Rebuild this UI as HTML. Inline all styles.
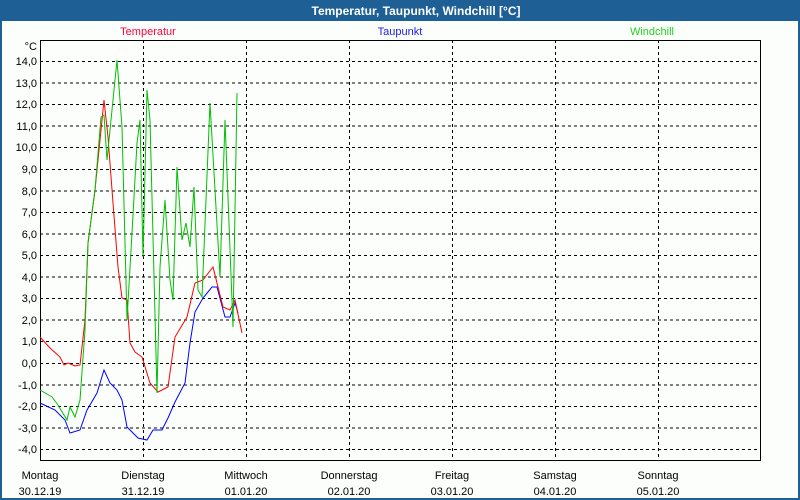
<!DOCTYPE html>
<html><head><meta charset="utf-8"><style>
html,body{margin:0;padding:0;width:800px;height:500px;overflow:hidden;background:#fcfefc;}
svg{display:block}
text{font-family:"Liberation Sans",sans-serif;font-size:11px;}
</style></head><body>
<svg width="800" height="500" xmlns="http://www.w3.org/2000/svg">
<rect x="0" y="0" width="800" height="500" fill="#1e6096"/>
<rect x="2" y="21" width="796" height="477" fill="#fcfefc"/>
<text x="416" y="15" fill="#fff" font-weight="bold" text-anchor="middle" textLength="209" lengthAdjust="spacingAndGlyphs" style="font-size:12px">Temperatur, Taupunkt, Windchill [°C]</text>
<text x="148" y="35" fill="#ff0040" text-anchor="middle">Temperatur</text>
<text x="400" y="35" fill="#2020e0" text-anchor="middle">Taupunkt</text>
<text x="652" y="35" fill="#20d020" text-anchor="middle">Windchill</text>
<g stroke="#000" stroke-width="1" stroke-dasharray="3,3" fill="none">
<path d="M40 61.5H760M40 83H760M40 104.5H760M40 126H760M40 147.5H760M40 169.5H760M40 191H760M40 212.5H760M40 234H760M40 255.5H760M40 277H760M40 298.5H760M40 320H760M40 341.5H760M40 363.5H760M40 385H760M40 406.5H760M40 428H760M40 449.5H760"/>
<path d="M143.5 40V460M246.5 40V460M349.5 40V460M452.5 40V460M555.5 40V460M658.5 40V460"/>
</g>
<rect x="40.5" y="40.5" width="720" height="420" fill="none" stroke="#000"/>
<g fill="#000" text-anchor="end">
<text x="37" y="50">°C</text>
<text x="37" y="65">14,0</text><text x="37" y="87">13,0</text><text x="37" y="108">12,0</text>
<text x="37" y="130">11,0</text><text x="37" y="151">10,0</text><text x="37" y="173">9,0</text>
<text x="37" y="195">8,0</text><text x="37" y="216">7,0</text><text x="37" y="238">6,0</text>
<text x="37" y="259">5,0</text><text x="37" y="281">4,0</text><text x="37" y="302">3,0</text>
<text x="37" y="324">2,0</text><text x="37" y="345">1,0</text><text x="37" y="367">0,0</text>
<text x="37" y="389">-1,0</text><text x="37" y="410">-2,0</text><text x="37" y="432">-3,0</text>
<text x="37" y="453">-4,0</text>
</g>
<g fill="#000" text-anchor="middle">
<text x="40" y="479">Montag</text><text x="40" y="495">30.12.19</text>
<text x="143" y="479">Dienstag</text><text x="143" y="495">31.12.19</text>
<text x="246" y="479">Mittwoch</text><text x="246" y="495">01.01.20</text>
<text x="349" y="479">Donnerstag</text><text x="349" y="495">02.01.20</text>
<text x="452" y="479">Freitag</text><text x="452" y="495">03.01.20</text>
<text x="555" y="479">Samstag</text><text x="555" y="495">04.01.20</text>
<text x="658" y="479">Sonntag</text><text x="658" y="495">05.01.20</text>
</g>
<polyline fill="none" stroke="#0000ff" points="40,403 55,410 65,420 70,433 80,430 87,410 97,393 104,370 110,383 117,390 122,400 127,427 138,438 147,440 153,430 162,430 168,418 175,402 185,383 190,343 195,312 203,298 212,287 217,287 225,317 230,317 235,303 238,313"/>
<polyline fill="none" stroke="#ff0000" points="40,337 50,348 60,357 64,365 68,363 75,366 80,365 85,320 88,243 95,190 104,100 108,137 113,203 118,267 122,298 127,300 130,343 135,352 142,357 150,383 158,392 168,387 175,337 187,317 195,283 203,280 213,267 223,307 230,310 235,300 242,333"/>
<polyline fill="none" stroke="#00c000" points="40,390 52,397 58,405 67,420 70,407 75,417 80,400 85,330 88,243 95,190 101,117 104,115 107,160 112,110 115,80 117,60 122,127 127,320 132,233 137,143 140,120 143,257 147,90 150,120 157,393 160,267 165,200 170,280 173,300 177,167 182,240 186,223 190,247 194,187 198,290 202,297 210,103 220,277 225,120 233,327 237,93"/>
</svg>
</body></html>
